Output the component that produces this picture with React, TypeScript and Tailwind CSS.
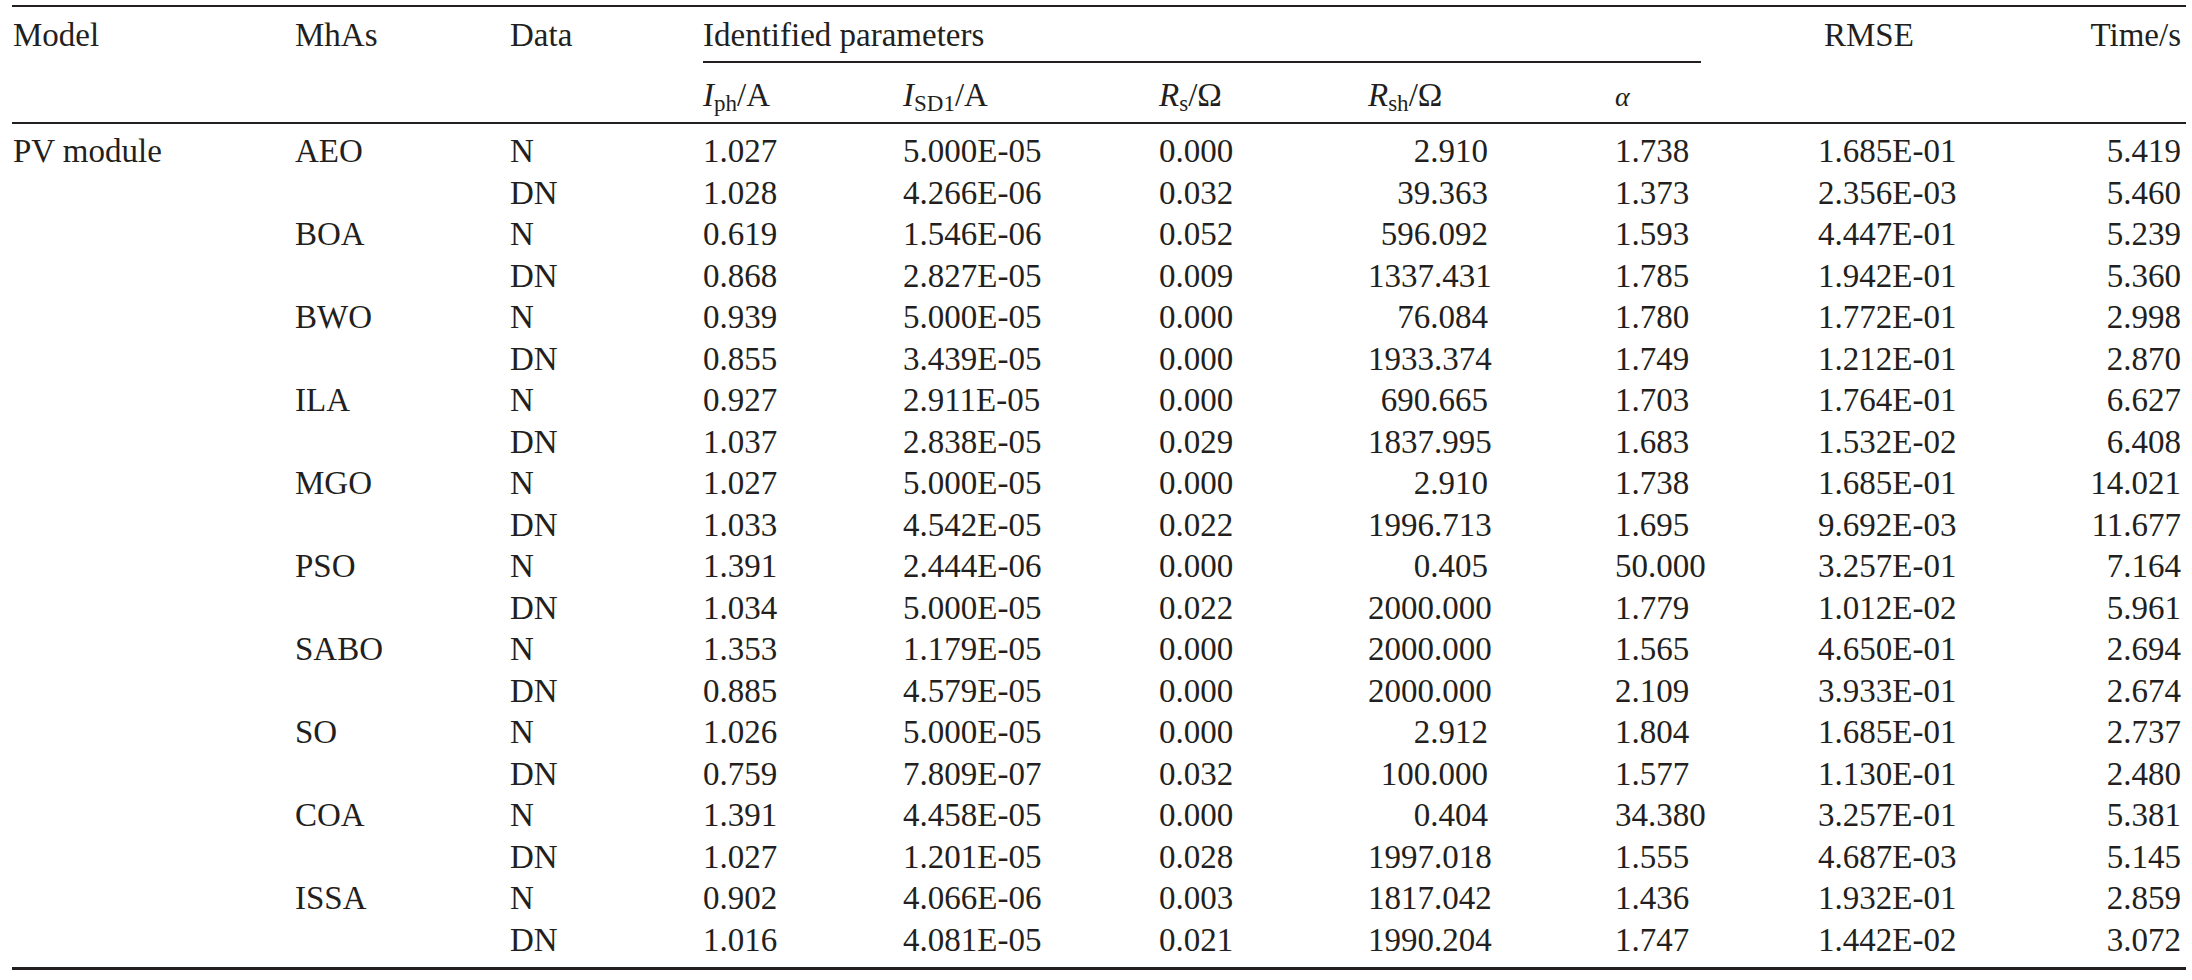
import React from "react";

const rows: string[][] = [
  ["AEO", "N", "1.027", "5.000E-05", "0.000", "2.910", "1.738", "1.685E-01", "5.419"],
  ["", "DN", "1.028", "4.266E-06", "0.032", "39.363", "1.373", "2.356E-03", "5.460"],
  ["BOA", "N", "0.619", "1.546E-06", "0.052", "596.092", "1.593", "4.447E-01", "5.239"],
  ["", "DN", "0.868", "2.827E-05", "0.009", "1337.431", "1.785", "1.942E-01", "5.360"],
  ["BWO", "N", "0.939", "5.000E-05", "0.000", "76.084", "1.780", "1.772E-01", "2.998"],
  ["", "DN", "0.855", "3.439E-05", "0.000", "1933.374", "1.749", "1.212E-01", "2.870"],
  ["ILA", "N", "0.927", "2.911E-05", "0.000", "690.665", "1.703", "1.764E-01", "6.627"],
  ["", "DN", "1.037", "2.838E-05", "0.029", "1837.995", "1.683", "1.532E-02", "6.408"],
  ["MGO", "N", "1.027", "5.000E-05", "0.000", "2.910", "1.738", "1.685E-01", "14.021"],
  ["", "DN", "1.033", "4.542E-05", "0.022", "1996.713", "1.695", "9.692E-03", "11.677"],
  ["PSO", "N", "1.391", "2.444E-06", "0.000", "0.405", "50.000", "3.257E-01", "7.164"],
  ["", "DN", "1.034", "5.000E-05", "0.022", "2000.000", "1.779", "1.012E-02", "5.961"],
  ["SABO", "N", "1.353", "1.179E-05", "0.000", "2000.000", "1.565", "4.650E-01", "2.694"],
  ["", "DN", "0.885", "4.579E-05", "0.000", "2000.000", "2.109", "3.933E-01", "2.674"],
  ["SO", "N", "1.026", "5.000E-05", "0.000", "2.912", "1.804", "1.685E-01", "2.737"],
  ["", "DN", "0.759", "7.809E-07", "0.032", "100.000", "1.577", "1.130E-01", "2.480"],
  ["COA", "N", "1.391", "4.458E-05", "0.000", "0.404", "34.380", "3.257E-01", "5.381"],
  ["", "DN", "1.027", "1.201E-05", "0.028", "1997.018", "1.555", "4.687E-03", "5.145"],
  ["ISSA", "N", "0.902", "4.066E-06", "0.003", "1817.042", "1.436", "1.932E-01", "2.859"],
  ["", "DN", "1.016", "4.081E-05", "0.021", "1990.204", "1.747", "1.442E-02", "3.072"],
];

const grid =
  "grid grid-cols-[283px_215px_193px_200px_256px_209px_247px_203px_182px_186px]";

function Sub({ children }: { children: React.ReactNode }) {
  return <span className="text-[23px] not-italic align-[-0.22em]">{children}</span>;
}

export default function App() {
  return (
    <div className="bg-white w-[2192px] h-[980px] pt-[5px] font-['Liberation_Serif',serif] text-[33px] text-[#231f20] overflow-hidden">
      <div className="ml-[12px] w-[2174px] border-t-2 border-[#231f20]">
        {/* header row 1 */}
        <div className={`${grid} h-[58px] leading-[41.5px]`}>
          <div className="pl-[1px] pt-[8px] whitespace-nowrap">Model</div>
          <div className="pt-[8px] whitespace-nowrap">MhAs</div>
          <div className="pt-[8px] whitespace-nowrap">Data</div>
          <div className="col-span-5 flex flex-col">
            <div className="pt-[8px] h-[56px] w-[998px] border-b-2 border-[#231f20] whitespace-nowrap">
              Identified parameters
            </div>
          </div>
          <div className="pl-[6px] pt-[8px] whitespace-nowrap">RMSE</div>
          <div className="pr-[5px] pt-[8px] text-right whitespace-nowrap">Time/s</div>
        </div>
        {/* header row 2 */}
        <div className={`${grid} h-[59px] leading-[41.5px] border-b-2 border-[#231f20]`}>
          <div />
          <div />
          <div />
          <div className="pt-[10px] whitespace-nowrap">
            <span className="italic">I</span>
            <Sub>ph</Sub>/A
          </div>
          <div className="pt-[10px] whitespace-nowrap">
            <span className="italic">I</span>
            <Sub>SD1</Sub>/A
          </div>
          <div className="pt-[10px] whitespace-nowrap">
            <span className="italic">R</span>
            <Sub>s</Sub>/Ω
          </div>
          <div className="pt-[10px] whitespace-nowrap">
            <span className="italic">R</span>
            <Sub>sh</Sub>/Ω
          </div>
          <div className="pt-[10px] whitespace-nowrap">
            <span className="italic text-[28px]">α</span>
          </div>
          <div />
          <div />
        </div>
        {/* data */}
        <div className="pt-[7px] pb-[6px] border-b-[3px] border-[#231f20]">
          {rows.map((r, i) => (
            <div key={i} className={`${grid} h-[41.5px] leading-[41.5px] whitespace-nowrap`}>
              <div className="pl-[1px]">{i === 0 ? "PV module" : ""}</div>
              <div>{r[0]}</div>
              <div>{r[1]}</div>
              <div>{r[2]}</div>
              <div>{r[3]}</div>
              <div>{r[4]}</div>
              <div className="text-right pr-[127px]">{r[5]}</div>
              <div>{r[6]}</div>
              <div>{r[7]}</div>
              <div className="text-right pr-[5px]">{r[8]}</div>
            </div>
          ))}
        </div>
      </div>
    </div>
  );
}
